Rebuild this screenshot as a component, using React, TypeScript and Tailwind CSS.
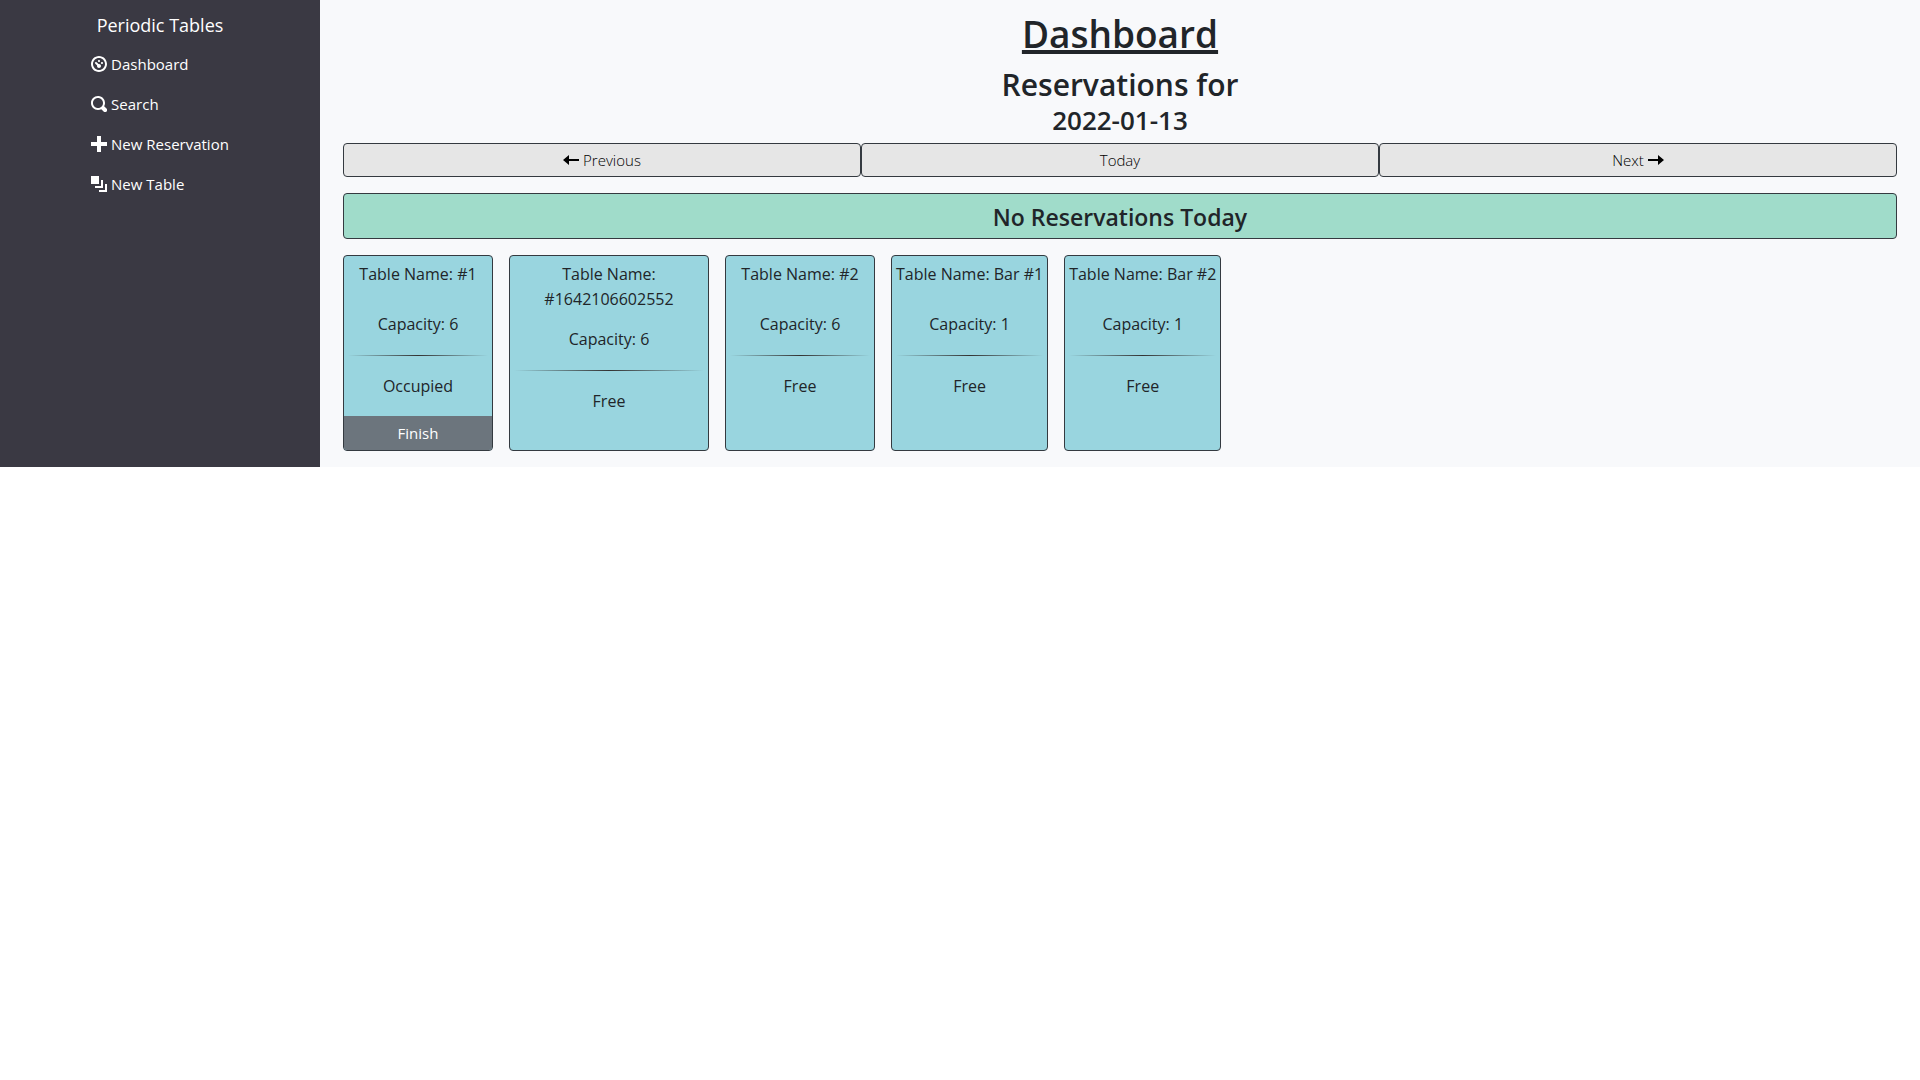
import type { ReactNode } from "react";

const icons = {
  dashboard:
    "M4 0c-2.2 0-4 1.8-4 4s1.8 4 4 4 4-1.8 4-4-1.8-4-4-4zm0 1c1.66 0 3 1.34 3 3s-1.34 3-3 3-3-1.34-3-3 1.34-3 3-3zm0 1c-.28 0-.5.22-.5.5s.22.5.5.5.5-.22.5-.5-.22-.5-.5-.5zm-1.66 1a.5.5 0 0 0-.19.84l.91.91c-.02.08-.06.16-.06.25 0 .55.45 1 1 1s1-.45 1-1-.45-1-1-1c-.09 0-.17.04-.25.06l-.91-.91a.5.5 0 0 0-.44-.16.5.5 0 0 0-.06 0zm3.16 0c-.28 0-.5.22-.5.5s.22.5.5.5.5-.22.5-.5-.22-.5-.5-.5z",
  search:
    "M3.5 0c-1.93 0-3.5 1.57-3.5 3.5s1.57 3.5 3.5 3.5c.59 0 1.17-.14 1.66-.41a1 1 0 0 0 .13.13l1 1a1.02 1.02 0 1 0 1.44-1.44l-1-1a1 1 0 0 0-.16-.13c.27-.49.44-1.06.44-1.66 0-1.93-1.55-3.5-3.5-3.5zm0 1c1.39 0 2.5 1.11 2.5 2.5 0 .66-.24 1.27-.66 1.72-.01.01-.02.02-.03.03a1 1 0 0 0-.13.13c-.44.4-1.04.63-1.69.63-1.39 0-2.5-1.11-2.5-2.5s1.11-2.5 2.5-2.5z",
  plus: "M3 0v3h-3v2h3v3h2v-3h3v-2h-3v-3h-2z",
  layers: "M0 0v4h4v-4h-4zm5 2v3h-3v1h4v-4h-1zm2 2v3h-3v1h4v-4h-1z",
  arrowLeft: "M3 1.5l-3 2.5 3 2.5v-2h5v-1h-5v-2z",
  arrowRight: "M5 1.5v2h-5v1h5v2l3-2.5-3-2.5z",
};

function Icon({ name }: { name: keyof typeof icons }) {
  return (
    <svg viewBox="0 0 8 8" className="size-4 shrink-0 fill-current" aria-hidden="true">
      <path d={icons[name]} />
    </svg>
  );
}

const links: { icon: keyof typeof icons; label: string }[] = [
  { icon: "dashboard", label: "Dashboard" },
  { icon: "search", label: "Search" },
  { icon: "plus", label: "New Reservation" },
  { icon: "layers", label: "New Table" },
];

const tables = [
  { name: "#1", capacity: 6, occupied: true },
  { name: "#1642106602552", capacity: 6, occupied: false },
  { name: "#2", capacity: 6, occupied: false },
  { name: "Bar #1", capacity: 1, occupied: false },
  { name: "Bar #2", capacity: 1, occupied: false },
];

function DayButton({ children }: { children: ReactNode }) {
  return (
    <button
      type="button"
      className="flex h-[34px] flex-1 items-center justify-center gap-1 rounded border border-[#343a40] bg-[#e6e6e6] font-light text-black"
    >
      {children}
    </button>
  );
}

export default function App() {
  return (
    <div className="flex bg-[#f8f9fb] font-['Open_Sans','Noto_Sans',sans-serif] text-[15px] text-[#212529]">
      <nav className="flex w-1/6 flex-col items-center bg-[#3a3943] text-white">
        <a href="#" className="mt-2 text-lg leading-[34px]">
          Periodic Tables
        </a>
        <ul className="mt-[2px]">
          {links.map((link) => (
            <li key={link.label}>
              <a href="#" className="flex h-10 items-center gap-1">
                <Icon name={link.icon} />
                {link.label}
              </a>
            </li>
          ))}
        </ul>
      </nav>
      <main className="flex-1 px-[23px] pb-4">
        <header className="pt-2 text-center font-semibold">
          <h1 className="text-[37px] leading-[52px] underline decoration-4">Dashboard</h1>
          <h2 className="mt-[6px] text-[30px] leading-[38px]">Reservations for</h2>
          <h3 className="text-[26px] leading-[32px]">2022-01-13</h3>
        </header>
        <div className="mt-[7px] flex">
          <DayButton>
            <Icon name="arrowLeft" />
            Previous
          </DayButton>
          <DayButton>Today</DayButton>
          <DayButton>
            Next
            <Icon name="arrowRight" />
          </DayButton>
        </div>
        <h4 className="mt-4 rounded border border-[#343a40] bg-[#a0dcca] pt-[2px] text-center text-[23px] leading-[42px] font-semibold">
          No Reservations Today
        </h4>
        <div className="mt-4 flex flex-wrap gap-4">
          {tables.map((table) => (
            <article
              key={table.name}
              className="flex h-[196px] max-w-[200px] min-w-[150px] flex-col overflow-hidden rounded border border-[#343a40] bg-[#99d5df] pt-[6px] text-center text-base leading-[25px]"
            >
              <h5 className="mb-[15px] min-h-[35px] px-1">Table Name: {table.name}</h5>
              <p>Capacity: {table.capacity}</p>
              <hr className="mx-1 my-[18px] h-px border-0 bg-linear-to-r from-transparent via-[#333] to-transparent" />
              <p>{table.occupied ? "Occupied" : "Free"}</p>
              {table.occupied && (
                <button type="button" className="mt-auto h-[34px] shrink-0 bg-[#6c757d] text-[15px] text-white">
                  Finish
                </button>
              )}
            </article>
          ))}
        </div>
      </main>
    </div>
  );
}
